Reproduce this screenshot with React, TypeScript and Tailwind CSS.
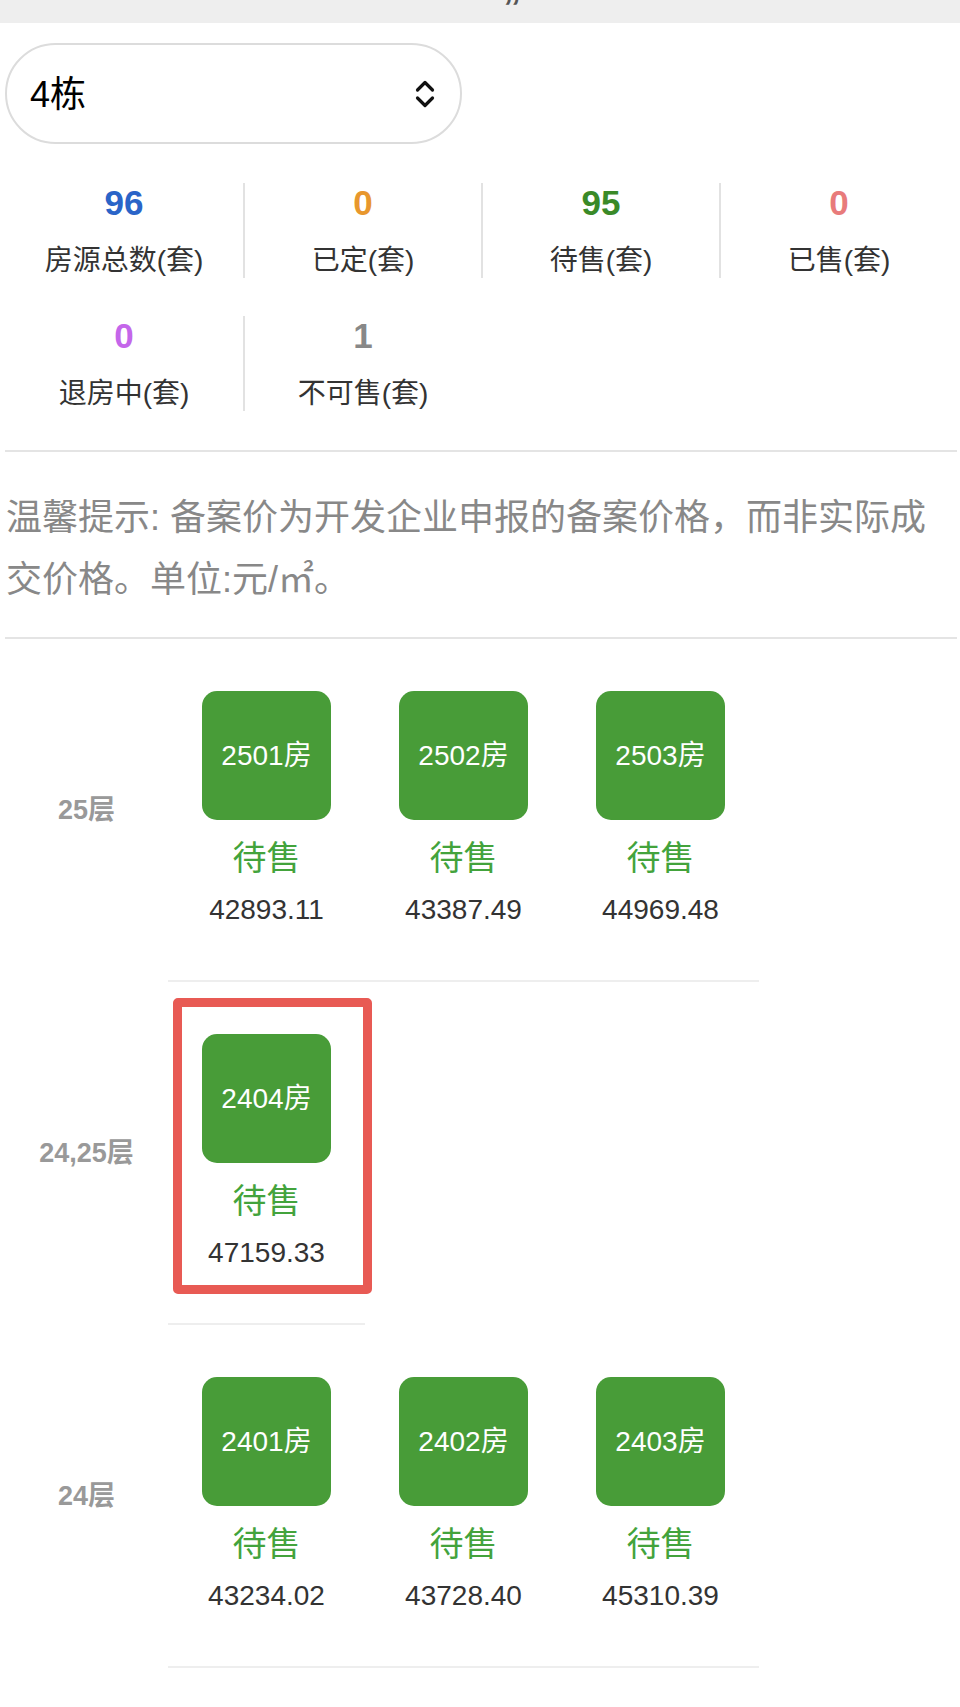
import React from "react";

type Stat = {
  value: string;
  label: string;
  color: string;
};

type Unit = {
  room: string;
  status: string;
  price: string;
  marked?: boolean;
};

type Floor = {
  name: string;
  units: Unit[];
};

const stats: Stat[] = [
  { value: "96", label: "房源总数(套)", color: "text-[#2a64c8]" },
  { value: "0", label: "已定(套)", color: "text-[#e8972d]" },
  { value: "95", label: "待售(套)", color: "text-[#3a8a28]" },
  { value: "0", label: "已售(套)", color: "text-[#e87b7b]" },
  { value: "0", label: "退房中(套)", color: "text-[#c466ea]" },
  { value: "1", label: "不可售(套)", color: "text-[#888888]" },
];

const floors: Floor[] = [
  {
    name: "25层",
    units: [
      { room: "2501房", status: "待售", price: "42893.11" },
      { room: "2502房", status: "待售", price: "43387.49" },
      { room: "2503房", status: "待售", price: "44969.48" },
    ],
  },
  {
    name: "24,25层",
    units: [{ room: "2404房", status: "待售", price: "47159.33", marked: true }],
  },
  {
    name: "24层",
    units: [
      { room: "2401房", status: "待售", price: "43234.02" },
      { room: "2402房", status: "待售", price: "43728.40" },
      { room: "2403房", status: "待售", price: "45310.39" },
    ],
  },
];

function UpDownIcon() {
  return (
    <svg width="22" height="34" viewBox="0 0 22 34" fill="none" stroke="#111" strokeWidth="3.2" strokeLinecap="round" strokeLinejoin="round">
      <path d="M3.5 13 L11 5.5 L18.5 13" />
      <path d="M3.5 21 L11 28.5 L18.5 21" />
    </svg>
  );
}

function UnitCell({ unit }: { unit: Unit }) {
  return (
    <div className="relative w-[197px] flex flex-col items-center pt-[52px] pb-[54px]">
      <div className="w-[129px] h-[129px] rounded-[15px] bg-[#489c38] flex items-center justify-center text-white text-[28px] leading-none">
        {unit.room}
      </div>
      <div className="mt-[18px] text-[34px] leading-[40px] text-[#43a33c]">{unit.status}</div>
      <div className="mt-[16px] text-[28px] leading-[32px] text-[#333333]">{unit.price}</div>
      {unit.marked && (
        <div className="absolute left-[5px] top-[16px] w-[199px] h-[296px] border-[9px] border-[#e85a54] rounded-[5px] pointer-events-none" />
      )}
    </div>
  );
}

export default function App() {
  return (
    <div className="min-h-screen bg-white font-['Liberation_Sans','Noto_Sans_CJK_SC',sans-serif]">
      {/* header bar, title cut off above */}
      <div className="h-[23px] bg-[#eeeeee] overflow-hidden pl-[503px]">
        <span className="block text-[36px] font-bold leading-none mt-[-10px] text-[#555555]">”</span>
      </div>

      <div className="pl-[5px] pr-[3px]">
        <div className="mt-[20px] h-[101px] w-[457px] rounded-full border-2 border-[#dcdcdc] flex items-center justify-between pl-[23px] pr-[24px]">
          <span className="text-[36px] leading-none mt-[3px] text-black">4栋</span>
          <UpDownIcon />
        </div>

        <div className="mt-[39px] grid grid-cols-4 gap-y-[38px]">
          {stats.map((s, i) => (
            <div
              key={s.label}
              className={`h-[95px] flex flex-col items-center ${i % 4 !== 0 ? "border-l-2 border-[#e2e2e2]" : ""}`}
            >
              <div className={`mt-[2px] text-[35px] font-bold leading-[36px] ${s.color}`}>{s.value}</div>
              <div className="mt-[22px] text-[28px] leading-[36px] text-[#333333]">{s.label}</div>
            </div>
          ))}
        </div>

        <div className="mt-[39px] border-t-2 border-b-2 border-[#e4e4e4] pt-[35px] pb-[26px] pl-[1px]">
          <p className="text-[36px] leading-[62px] text-[#888888]">
            温馨提示: 备案价为开发企业申报的备案价格，而非实际成交价格。单位:元/㎡。
          </p>
        </div>

        {floors.map((floor) => (
          <div key={floor.name} className="flex">
            <div className="w-[163px] flex items-center justify-center text-[27px] font-bold text-[#999999]">
              {floor.name}
            </div>
            <div className="flex border-b-2 border-[#eeeeee]">
              {floor.units.map((u) => (
                <UnitCell key={u.room} unit={u} />
              ))}
            </div>
          </div>
        ))}
      </div>
    </div>
  );
}
